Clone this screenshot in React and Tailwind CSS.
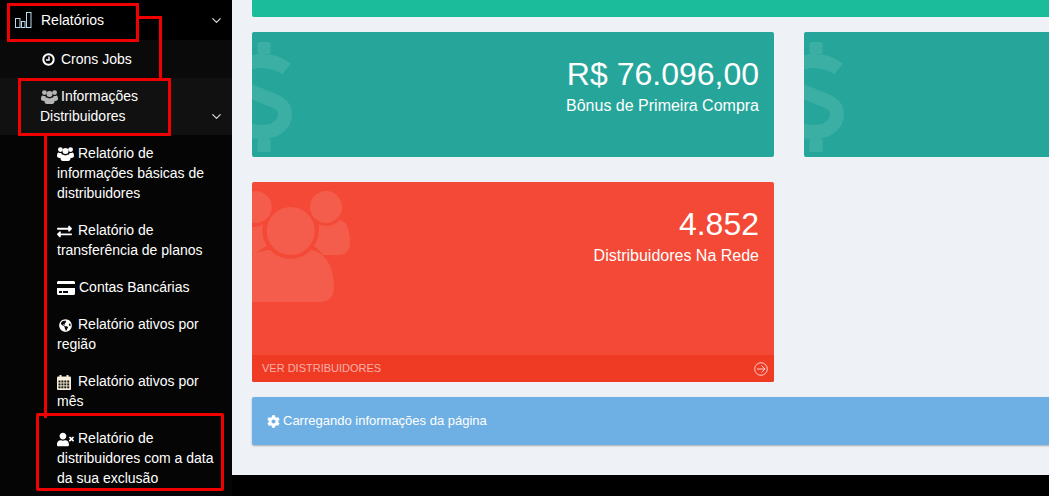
import { FaExchangeAlt, FaCreditCard, FaGlobeAmericas, FaUserTimes, FaCog } from 'react-icons/fa';
import { LuChevronDown } from 'react-icons/lu';

function ChartIcon() {
  return (
    <svg width="17" height="16" viewBox="0 0 17 16" fill="none" stroke="#b5dcef" strokeWidth="1">
      <rect x="0.5" y="6.5" width="4.5" height="9" />
      <rect x="6.5" y="9.5" width="3.5" height="6" />
      <rect x="11.5" y="0.5" width="4.5" height="15" />
    </svg>
  );
}

function ClockIcon() {
  return (
    <svg width="13" height="13" viewBox="0 0 13 13" fill="none" stroke="white">
      <circle cx="6.5" cy="6.5" r="5.2" strokeWidth="2" />
      <path d="M7 3.5V7H4" strokeWidth="1.4" />
    </svg>
  );
}

function UsersIcon({ className }) {
  return (
    <svg width="17" height="14" viewBox="0 0 17 14" fill="currentColor" className={className}>
      <circle cx="3.4" cy="2.6" r="2.4" />
      <circle cx="13.6" cy="2.6" r="2.4" />
      <circle cx="8.5" cy="4" r="3" />
      <path d="M0 9c0-2 .6-3.6 1.6-3.6.7.6 1.800.8 2.700.6.2 1 .7 1.800 1.400 2.400C4.600 8.900 3.900 9.900 3.700 11 1.500 11 0 10.500 0 9z" />
      <path d="M17 9c0-2-.6-3.600-1.600-3.600-.7.6-1.800.8-2.700.6-.2 1-.7 1.800-1.400 2.400 1.100.5 1.800 1.500 2 2.600 2.200 0 3.700-.5 3.700-2z" />
      <path d="M5.800 7.600c1.400 1.100 4 1.100 5.400 0 1.500.3 2.300 1.900 2.300 4 0 1.500-1 2.400-2.300 2.400H5.800c-1.300 0-2.300-.9-2.300-2.400 0-2.100.8-3.700 2.300-4z" />
    </svg>
  );
}

function CalendarIcon() {
  const cells = [];
  for (let r = 0; r < 3; r++) {
    for (let c = 0; c < 4; c++) {
      cells.push(<rect key={`${r}-${c}`} x={1.5 + c * 2.9} y={5.5 + r * 2.9} width="2" height="2" fill="#1a1812" />);
    }
  }
  return (
    <svg width="14" height="15" viewBox="0 0 14 15" className="text-[#f6eeda]">
      <rect x="0" y="1.500" width="14" height="13.500" rx="1" fill="currentColor" />
      <rect x="2.500" y="0" width="2" height="4" fill="currentColor" />
      <rect x="9.500" y="0" width="2" height="4" fill="currentColor" />
      {cells}
    </svg>
  );
}

// cifrão do fundo dos cards, cortado na borda esquerda
function DollarBg() {
  return (
    <svg width="44" height="125" viewBox="0 0 44 125" className="shrink-0">
      <path fill="none" stroke="white" strokeOpacity="0.1" strokeWidth="14" d="M34.500 37C28 32 18 29 10 29C-4 29-12 36-12 46C-12 56-2 59 10 64C24 69 33 72 33 82C33 94 22 100 10 100C0 100-6 98-12 94" />
      <rect x="5.500" y="10" width="13" height="12" rx="1.500" fill="white" fillOpacity="0.1" />
      <rect x="5.500" y="107" width="13" height="13" rx="1.500" fill="white" fillOpacity="0.1" />
    </svg>
  );
}

function PeopleIcon() {
  return (
    <svg width="100" height="125" viewBox="0 0 100 125" fill="white" fillOpacity="0.11" className="shrink-0">
      <circle cx="3.700" cy="25" r="16" />
      <circle cx="38.700" cy="49" r="24" />
      <circle cx="74" cy="25" r="16" />
      <path d="M0 45C4 45 8 44 11 42L10.400 48C10.400 54 12 60 15 64C10 66 6 69 3 73L0 73Z" />
      <path d="M92 40C96 42 98 52 98 62C98 70 92 73 86 73L71 73C68 69 65 66 62 64C65 59 67 54 67 48L67 42.500A19 19 0 0 0 88 38Z" />
      <path d="M59 68C74 70 82 86 82 106C82 115 76 120 68 120L0 120L0 74C5 70 12 68 18 68A28 28 0 0 0 59 68Z" />
    </svg>
  );
}

function ArrowCircle() {
  return (
    <svg width="14" height="14" viewBox="0 0 14 14" fill="none" stroke="white" strokeWidth="1" strokeOpacity="0.75">
      <circle cx="7" cy="7" r="6.300" />
      <path d="M3 7h8M7.500 3.500 11 7l-3.500 3.500" />
    </svg>
  );
}

const subItems = [
  { icon: <UsersIcon />, w: 'w-[17px]', label: 'Relatório de informações básicas de distribuidores' },
  { icon: <FaExchangeAlt size={15} />, w: 'w-[17px]', label: 'Relatório de transferência de planos' },
  { icon: <FaCreditCard size={18} />, w: 'w-[18px]', label: 'Contas Bancárias' },
  { icon: <FaGlobeAmericas size={13} className="ml-[2px]" />, w: 'w-[17px]', label: 'Relatório ativos por região' },
  { icon: <CalendarIcon />, w: 'w-[17px]', label: 'Relatório ativos por mês' },
  { icon: <FaUserTimes size={17} />, w: 'w-[17px]', label: 'Relatório de distribuidores com a data da sua exclusão' },
];

function Sidebar() {
  return (
    <aside className="w-[232px] shrink-0 bg-[#050505] text-white text-[14px] leading-5">
      <div className="h-10 bg-black flex items-center justify-between pl-[15px] pr-[8px]">
        <span className="flex items-center gap-[9px]"><ChartIcon />Relatórios</span>
        <LuChevronDown size={15} className="text-[#d5d5d5]" />
      </div>
      <div className="h-[38px] bg-[#0a0a0a] flex items-center pl-[42px] gap-[6px]">
        <ClockIcon />
        Crons Jobs
      </div>
      <div className="h-[57px] bg-[#111111] pl-10 pr-[8px] pt-2">
        <div>
          <span className="inline-flex items-center h-[14px] align-middle w-[21px] pl-px text-[#b5b5b5]"><UsersIcon /></span>
          Informações
        </div>
        <div className="flex items-center justify-between">
          Distribuidores
          <LuChevronDown size={15} className="text-[#d5d5d5]" />
        </div>
      </div>
      <ul className="pr-3 -mt-[1px]">
        {subItems.map(({ icon, w, label }) => (
          <li key={label} className="pl-[57px] pt-2 first:pt-[9px] pb-[9px]">
            <span className={`inline-flex items-center h-[14px] align-middle mr-1 ${w}`}>{icon}</span>
            {label}
          </li>
        ))}
      </ul>
    </aside>
  );
}

function StatCard({ value, label }) {
  return (
    <div className="h-[125px] rounded-[2px] overflow-hidden text-white flex justify-between pr-[15px] bg-[#26a69a]">
      <DollarBg />
      <div className="text-right pt-[22px]">
        <div className="text-[32px] leading-10">{value}</div>
        <div className="text-[16px] leading-5 mt-[2px]">{label}</div>
      </div>
    </div>
  );
}

export default function App() {
  return (
    <div className="relative w-[1049px] h-[496px] overflow-hidden bg-black font-['Liberation_Sans',Arial,sans-serif]">
      <div className="flex h-[496px]">
        <Sidebar />
        <main className="flex-1 min-w-0 h-[475px] bg-[#eef1f6] pl-5 overflow-hidden">
          <div className="h-[17px] w-[1100px] bg-[#1abc9c] rounded-b-[2px]" />
          <div className="grid grid-cols-[522px_522px] gap-x-[30px] gap-y-[25px] mt-[15px] w-[1074px]">
            <StatCard value="R$ 76.096,00" label="Bônus de Primeira Compra" />
            <StatCard value="" label="" />
            <div className="h-[200px] rounded-[2px] overflow-hidden text-white flex flex-col bg-[#f34936]">
              <div className="flex-1 flex justify-between pr-[15px]">
                <PeopleIcon />
                <div className="text-right pt-[22px]">
                  <div className="text-[32px] leading-10">4.852</div>
                  <div className="text-[16px] leading-5 mt-[2px]">Distribuidores Na Rede</div>
                </div>
              </div>
              <div className="h-[27px] bg-[#ef3a24] flex items-center justify-between pl-[10px] pr-[6px] text-[11px] text-white/60">
                VER DISTRIBUIDORES
                <ArrowCircle />
              </div>
            </div>
          </div>
          <div className="mt-[15px] w-[1100px] h-[48px] bg-[#6fb0e4] rounded-[2px] shadow-[0_1px_2px_rgba(0,0,0,0.3)] flex items-center pl-[15px] text-[13px] text-white gap-[3px]">
            <FaCog size={13} />
            Carregando informações da página
          </div>
        </main>
      </div>

      {/* marcações vermelhas por cima do print */}
      <div className="absolute left-[7px] top-[3px] w-[132px] h-[39px] border-[3px] border-[#f00000]" />
      <div className="absolute left-[139px] top-[16px] w-[23px] h-[63px] border-t-[3px] border-r-[3px] border-[#f00000]" />
      <div className="absolute left-[18px] top-[78px] w-[153px] h-[58px] border-[3px] border-[#f00000]" />
      <div className="absolute left-[44px] top-[135px] w-[3px] h-[283px] bg-[#f00000]" />
      <div className="absolute left-[36px] top-[413px] w-[188px] h-[78px] border-[3px] border-[#f00000] rounded-[2px]" />
    </div>
  );
}
